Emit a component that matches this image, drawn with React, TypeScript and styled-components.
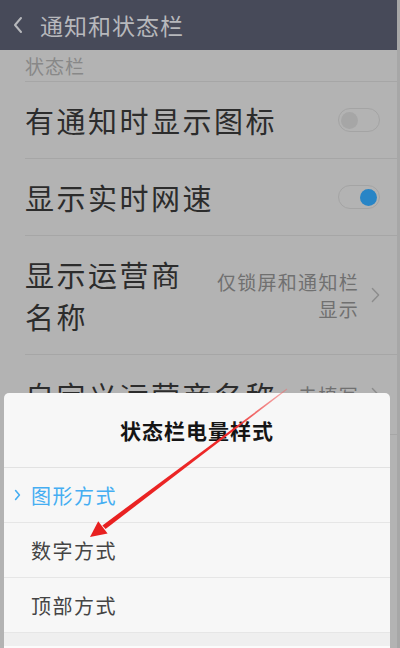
import React from "react";
import styled, { createGlobalStyle } from "styled-components";

const Global = createGlobalStyle`
  html, body { margin: 0; padding: 0; }
  body { width: 400px; height: 648px; overflow: hidden; background: #b3b3b3;
    font-family: "Noto Sans CJK SC", "Noto Sans", sans-serif; }
`;

const Screen = styled.div`
  position: relative;
  width: 400px;
  height: 648px;
  overflow: hidden;
  background: #b3b3b3;
  display: flex;
  flex-direction: column;
  box-sizing: border-box;
  border-right: 3px solid #a7a7a7;
`;

const Header = styled.div`
  height: 50px;
  flex: none;
  background: #474a59;
  display: flex;
  align-items: center;
  padding-left: 12px;
  gap: 16px;
  box-sizing: border-box;
`;

const HeaderTitle = styled.div`
  color: #b7b8bc;
  font-size: 23px;
  letter-spacing: 1px;
  line-height: 1;
`;

const Content = styled.div`
  display: flex;
  flex-direction: column;
  padding-left: 25px;
`;

const SectionLabel = styled.div`
  height: 32px;
  display: flex;
  align-items: center;
  font-size: 19px;
  letter-spacing: 1px;
  color: #888888;
  border-bottom: 1px solid #a6a6a6;
  box-sizing: border-box;
`;

const Row = styled.div<{ $h: number }>`
  height: ${(p) => p.$h}px;
  display: flex;
  align-items: center;
  justify-content: space-between;
  padding-right: 17px;
  border-bottom: 1px solid #a6a6a6;
  box-sizing: border-box;
`;

const RowTitle = styled.div`
  font-size: 29px;
  letter-spacing: 2.5px;
  line-height: 42px;
  color: #2c2c2c;
`;

const RowRight = styled.div`
  display: flex;
  align-items: center;
  gap: 12px;
`;

const RowValue = styled.div`
  font-size: 19px;
  letter-spacing: 1.3px;
  line-height: 27px;
  color: #707070;
  text-align: right;
`;

const Toggle = styled.div<{ $on: boolean }>`
  width: 42px;
  height: 24px;
  border-radius: 12px;
  border: 1px solid #a4a4a4;
  box-sizing: border-box;
  display: flex;
  align-items: center;
  justify-content: ${(p) => (p.$on ? "flex-end" : "flex-start")};
  padding: 0 2px;
`;

const Knob = styled.div<{ $on: boolean }>`
  width: 17px;
  height: 17px;
  border-radius: 50%;
  background: ${(p) => (p.$on ? "#2885c6" : "#a6a6a6")};
`;

const Sheet = styled.div`
  position: absolute;
  left: 4px;
  right: 7px;
  top: 393px;
  bottom: 0;
  background: #f7f7f7;
  border-radius: 5px 5px 0 0;
  display: flex;
  flex-direction: column;
`;

const SheetTitle = styled.div`
  height: 75px;
  flex: none;
  display: flex;
  align-items: center;
  justify-content: center;
  font-size: 21px;
  font-weight: 700;
  letter-spacing: 1px;
  color: #151515;
  border-bottom: 1px solid #e2e2e2;
  box-sizing: border-box;
`;

const Option = styled.div<{ $active?: boolean }>`
  height: 55px;
  flex: none;
  display: flex;
  align-items: center;
  gap: 6px;
  padding-left: 10px;
  font-size: 20px;
  letter-spacing: 1.5px;
  color: ${(p) => (p.$active ? "#45aef2" : "#444444")};
  border-bottom: 1px solid #e6e6e6;
  box-sizing: border-box;
`;

const CheckSlot = styled.div`
  width: 11px;
  display: flex;
  align-items: center;
`;

const SheetFooter = styled.div`
  flex: 1;
  background: #efefef;
  border-bottom: 2px solid #fbfbfb;
`;

const Overlay = styled.svg`
  position: absolute;
  left: 0;
  top: 0;
  pointer-events: none;
`;

const Chevron = ({ color, w, h, sw }: { color: string; w: number; h: number; sw: number }) => (
  <svg width={w} height={h} viewBox={`0 0 ${w} ${h}`}>
    <polyline
      points={`${sw},${sw} ${w - sw},${h / 2} ${sw},${h - sw}`}
      fill="none"
      stroke={color}
      strokeWidth={sw}
      strokeLinecap="round"
      strokeLinejoin="round"
    />
  </svg>
);

const BackIcon = () => (
  <svg width="12" height="18" viewBox="0 0 12 18">
    <polyline points="9,2 3,9 9,16" fill="none" stroke="#b7b8bc" strokeWidth="2" strokeLinecap="round" strokeLinejoin="round" />
  </svg>
);

export default function App() {
  return (
    <>
      <Global />
      <Screen>
        <Header>
          <BackIcon />
          <HeaderTitle>通知和状态栏</HeaderTitle>
        </Header>
        <Content>
          <SectionLabel>状态栏</SectionLabel>
          <Row $h={77}>
            <RowTitle>有通知时显示图标</RowTitle>
            <Toggle $on={false}>
              <Knob $on={false} />
            </Toggle>
          </Row>
          <Row $h={77}>
            <RowTitle>显示实时网速</RowTitle>
            <Toggle $on={true}>
              <Knob $on={true} />
            </Toggle>
          </Row>
          <Row $h={119}>
            <RowTitle>
              显示运营商
              <br />
              名称
            </RowTitle>
            <RowRight>
              <RowValue>
                仅锁屏和通知栏
                <br />
                显示
              </RowValue>
              <Chevron color="#8c8c8c" w={9} h={16} sw={1.4} />
            </RowRight>
          </Row>
          <Row $h={80}>
            <RowTitle>自定义运营商名称</RowTitle>
            <RowRight>
              <RowValue>未填写</RowValue>
              <Chevron color="#8c8c8c" w={9} h={16} sw={1.4} />
            </RowRight>
          </Row>
        </Content>
        <Sheet>
          <SheetTitle>状态栏电量样式</SheetTitle>
          <Option $active>
            <CheckSlot>
              <Chevron color="#45aef2" w={7} h={12} sw={1.6} />
            </CheckSlot>
            图形方式
          </Option>
          <Option>
            <CheckSlot />
            数字方式
          </Option>
          <Option>
            <CheckSlot />
            顶部方式
          </Option>
          <SheetFooter />
        </Sheet>
        <Overlay width="400" height="648" viewBox="0 0 400 648">
          <defs>
            <linearGradient id="arrowGrad" x1="287" y1="389" x2="104" y2="527" gradientUnits="userSpaceOnUse">
              <stop offset="0" stopColor="#f06a6a" stopOpacity="0.5" />
              <stop offset="0.3" stopColor="#ee2a2a" />
              <stop offset="1" stopColor="#e82020" />
            </linearGradient>
          </defs>
          <polygon
            points="287.3,389.4 286.7,388.6 102.4,525.4 105.6,529"
            fill="url(#arrowGrad)"
          />
          <polygon points="90,537 98.2,521.2 107.6,533.6" fill="#e82020" />
        </Overlay>
      </Screen>
    </>
  );
}
